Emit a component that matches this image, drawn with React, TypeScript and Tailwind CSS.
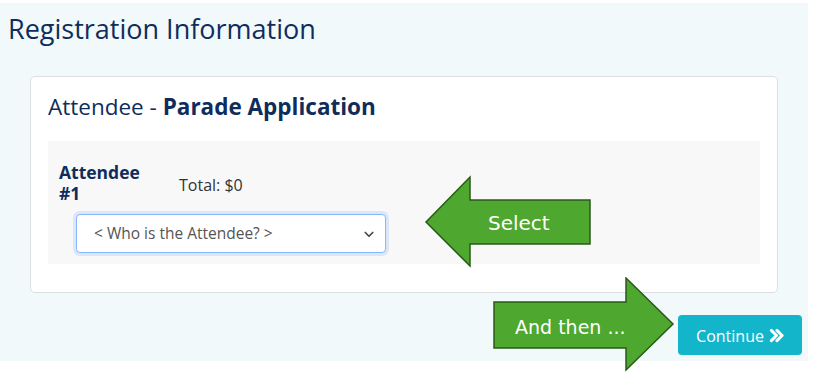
import React from 'react';

const LeftArrow = () => (
  <div className="absolute left-[424px] top-[175px] h-[93px] w-[168px]">
    <svg className="absolute inset-0" width="168" height="93" viewBox="0 0 168 93">
      <polygon
        points="2,47 46,2 46,25 166,25 166,69 46,69 46,91"
        fill="#4ea72e"
        stroke="#2a5a18"
        strokeWidth="1.5"
      />
    </svg>
    <span className="absolute left-[64px] top-[36px] text-[20px] leading-[24px] text-white [font-family:'DejaVu_Sans',sans-serif]">
      Select
    </span>
  </div>
);

const RightArrow = () => (
  <div className="absolute left-[493px] top-[277px] h-[95px] w-[182px]">
    <svg className="absolute inset-0" width="182" height="95" viewBox="0 0 182 95">
      <polygon
        points="1,25 133,25 133,1 180,47 133,93 133,71 1,71"
        fill="#4ea72e"
        stroke="#2a5a18"
        strokeWidth="1.5"
      />
    </svg>
    <span className="absolute left-[22px] top-[38px] text-[19px] leading-[24px] text-white [font-family:'DejaVu_Sans',sans-serif]">
      And then ...
    </span>
  </div>
);

export default function App() {
  return (
    <div className="relative h-[381px] w-[817px] bg-white pt-[3px] [font-family:'Open_Sans',sans-serif]">
      <div className="flex h-[358px] w-[808px] flex-col bg-[#f1f9fb] px-[8px] pt-[8px]">
        <h1 className="text-[27px] leading-[36px] text-[#0f2d5c]">Registration Information</h1>

        {/* Card */}
        <div className="ml-[22px] mt-[29px] h-[217px] w-[748px] rounded-[5px] border border-[#dcdfe2] bg-white px-[17px] pt-[14px]">
          <h2 className="text-[22.5px] leading-[32px] text-[#0f2d5c]">
            Attendee - <span className="font-bold">Parade Application</span>
          </h2>

          <div className="mt-[18px] flex h-[123px] flex-col gap-[10px] bg-[#f8f8f8] px-[11px] pt-[21px]">
            <div className="flex items-center">
              <div className="flex w-[120px] flex-col text-[17.5px] font-bold leading-[21px] text-[#0f2d5c]">
                <span>Attendee</span>
                <span>#1</span>
              </div>
              <div className="pt-[4px] text-[16px] leading-[22px] text-[#333]">Total: $0</div>
            </div>

            <div className="ml-[17px] flex h-[39px] w-[310px] items-center justify-between rounded-[4px] border border-[#86b7fe] bg-white pl-[17px] pr-[10px] shadow-[0_0_0_3px_rgba(13,110,253,0.12)]">
              <span className="text-[15.5px] text-[#555]">&lt; Who is the Attendee? &gt;</span>
              <svg width="12" height="12" viewBox="0 0 16 16" fill="none" stroke="#444" strokeWidth="2.2" strokeLinecap="round" strokeLinejoin="round">
                <path d="M3 6l5 5 5-5" />
              </svg>
            </div>
          </div>
        </div>

        <div className="mr-[-2px] mt-[22px] flex justify-end">
          <button className="flex h-[40px] w-[124px] items-center justify-center gap-[5px] rounded-[4px] bg-[#13b5cb] pt-[1px] text-[16px] text-white">
            Continue
            <svg width="15" height="15" viewBox="0 0 16 16" fill="none" stroke="white" strokeWidth="3.2" strokeLinecap="round" strokeLinejoin="round">
              <path d="M2.5 2.5l5.5 5.5-5.5 5.5M8.5 2.5l5.5 5.5-5.5 5.5" />
            </svg>
          </button>
        </div>
      </div>

      <LeftArrow />
      <RightArrow />
    </div>
  );
}
